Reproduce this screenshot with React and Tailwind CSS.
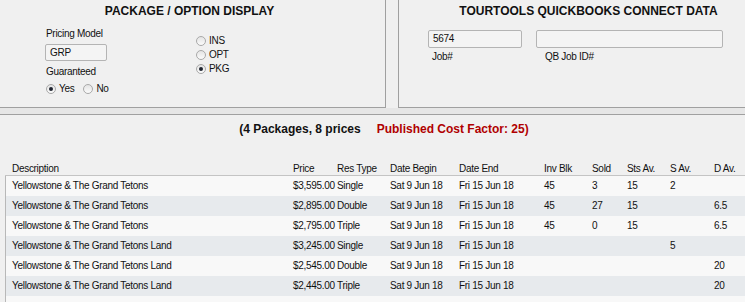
import React from 'react'

const rows = [
  ['Yellowstone & The Grand Tetons', '$3,595.00', 'Single', 'Sat 9 Jun 18', 'Fri 15 Jun 18', '45', '3', '15', '2', ''],
  ['Yellowstone & The Grand Tetons', '$2,895.00', 'Double', 'Sat 9 Jun 18', 'Fri 15 Jun 18', '45', '27', '15', '', '6.5'],
  ['Yellowstone & The Grand Tetons', '$2,795.00', 'Triple', 'Sat 9 Jun 18', 'Fri 15 Jun 18', '45', '0', '15', '', '6.5'],
  ['Yellowstone & The Grand Tetons Land', '$3,245.00', 'Single', 'Sat 9 Jun 18', 'Fri 15 Jun 18', '', '', '', '5', ''],
  ['Yellowstone & The Grand Tetons Land', '$2,545.00', 'Double', 'Sat 9 Jun 18', 'Fri 15 Jun 18', '', '', '', '', '20'],
  ['Yellowstone & The Grand Tetons Land', '$2,445.00', 'Triple', 'Sat 9 Jun 18', 'Fri 15 Jun 18', '', '', '', '', '20'],
]

const headers = ['Description', 'Price', 'Res Type', 'Date Begin', 'Date End', 'Inv Blk', 'Sold', 'Sts Av.', 'S Av.', 'D Av.']

const cols = 'grid grid-cols-[281px_44px_53px_69px_85px_48px_35px_43px_44px_1fr]'

const Radio = ({ checked, label }) => (
  <div className="flex items-center h-[14px] gap-[3px]">
    <span className="w-[10px] h-[10px] rounded-full border border-[#a9a9a9] bg-gradient-to-b from-[#e4e4e4] to-[#fbfbfb] flex items-center justify-center">
      {checked && <span className="w-[4px] h-[4px] rounded-full bg-[#1f2430]" />}
    </span>
    <span>{label}</span>
  </div>
)

const Field = ({ value, className }) => (
  <div className={`border border-[#b4b4b4] rounded-[2px] bg-[#f4f4f4] pl-[4px] flex items-center ${className}`}>
    {value}
  </div>
)

const App = () => {
  return (
    <div className="w-[745px] h-[302px] overflow-hidden bg-[#f0f0f0] text-[#111] text-[10px] tracking-[-0.3px] leading-[12px] font-['Liberation_Sans',Arial,sans-serif]">
      {/* top panels */}
      <div className="flex h-[108px]">
        <div className="-ml-[6px] w-[392px] shrink-0 border-r border-b border-[#a0a0a0]">
          <h2 className="pt-[4px] text-center text-[12px] leading-[15px] tracking-normal font-bold">PACKAGE / OPTION DISPLAY</h2>
          <div className="flex pl-[52px]">
            <div className="w-[150px] pt-[9px]">
              <div>Pricing Model</div>
              <Field value="GRP" className="mt-[4px] w-[62px] h-[17px] -ml-[1px]" />
              <div className="mt-[5px]">Guaranteed</div>
              <div className="mt-[4px] flex gap-[9px]">
                <Radio checked label="Yes" />
                <Radio label="No" />
              </div>
            </div>
            <div className="pt-[15px]">
              <Radio label="INS" />
              <Radio label="OPT" />
              <Radio checked label="PKG" />
            </div>
          </div>
        </div>
        <div className="ml-[12px] w-[380px] shrink-0 border-l border-b border-[#a0a0a0]">
          <h2 className="pt-[4px] text-center text-[12px] leading-[15px] tracking-normal font-bold">TOURTOOLS QUICKBOOKS CONNECT DATA</h2>
          <div className="flex pl-[29px] pt-[11px] gap-[14px]">
            <div>
              <Field value="5674" className="w-[94px] h-[18px]" />
              <div className="mt-[3px] pl-[4px]">Job#</div>
            </div>
            <div>
              <Field value="" className="w-[187px] h-[18px]" />
              <div className="mt-[3px] pl-[9px]">QB Job ID#</div>
            </div>
          </div>
        </div>
      </div>

      <div className="h-[6px] bg-[#e6e6e6]" />

      {/* lower panel */}
      <div className="border-t border-[#a0a0a0]">
        <div className="pt-[7px] pl-[23px] flex justify-center gap-[16px] text-[12px] leading-[15px] tracking-normal font-bold">
          <span>(4 Packages, 8 prices</span>
          <span className="text-[#b00000]">Published Cost Factor: 25)</span>
        </div>

        <div className="ml-[5px] mt-[25px]">
          <div className={`${cols} pl-[7px] h-[14px] pt-[1px] border-b border-[#c4c4c4]`}>
            {headers.map((h) => (
              <span key={h}>{h}</span>
            ))}
          </div>
          <div className="border-l border-[#b8b8b8]">
            {rows.map((r, i) => (
              <div
                key={i}
                className={`${cols} pl-[6px] h-[20px] items-center ${i % 2 ? 'bg-[#e7eaed]' : 'bg-[#f8f8f8]'}`}
              >
                {r.map((c, j) => (
                  <span key={j} className="whitespace-nowrap">{c}</span>
                ))}
              </div>
            ))}
            <div className="h-[20px] bg-[#f8f8f8]" />
          </div>
        </div>
      </div>
    </div>
  )
}

export default App
